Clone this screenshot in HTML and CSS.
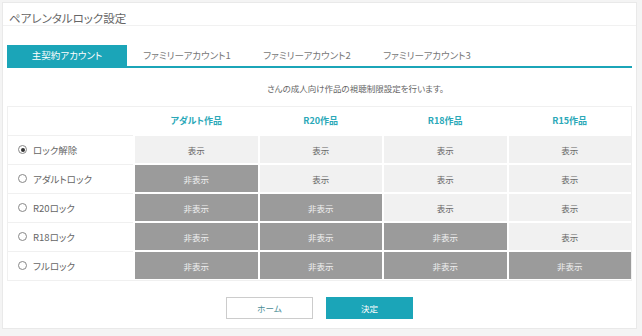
FILE: index.html
```html
<!DOCTYPE html>
<html lang="ja">
  <head>
    <meta charset="UTF-8" />
    <meta name="viewport" content="width=device-width, initial-scale=1.0" />
    <title>ペアレンタルロック設定</title>
    <link rel="stylesheet" href="styles.css">
  </head>
  <body>
    <div class="panel">
      <h2 class="panel-title">ペアレンタルロック設定</h2>

      <div class="tabs">
        <div class="tab active">主契約アカウント</div>
        <div class="tab">ファミリーアカウント1</div>
        <div class="tab">ファミリーアカウント2</div>
        <div class="tab">ファミリーアカウント3</div>
      </div>

      <p class="lead"><span class="user-name"></span>さんの成人向け作品の視聴制限設定を行います。</p>

      <!-- 制限テーブル -->
      <div class="lock-table">
        <div class="head"></div>
        <div class="head">アダルト作品</div>
        <div class="head">R20作品</div>
        <div class="head">R18作品</div>
        <div class="head">R15作品</div>

        <label class="label"><span class="radio checked"></span>ロック解除</label>
        <div class="cell">表示</div>
        <div class="cell">表示</div>
        <div class="cell">表示</div>
        <div class="cell">表示</div>

        <label class="label"><span class="radio"></span>アダルトロック</label>
        <div class="cell off">非表示</div>
        <div class="cell">表示</div>
        <div class="cell">表示</div>
        <div class="cell">表示</div>

        <label class="label"><span class="radio"></span>R20ロック</label>
        <div class="cell off">非表示</div>
        <div class="cell off">非表示</div>
        <div class="cell">表示</div>
        <div class="cell">表示</div>

        <label class="label"><span class="radio"></span>R18ロック</label>
        <div class="cell off">非表示</div>
        <div class="cell off">非表示</div>
        <div class="cell off">非表示</div>
        <div class="cell">表示</div>

        <label class="label"><span class="radio"></span>フルロック</label>
        <div class="cell off">非表示</div>
        <div class="cell off">非表示</div>
        <div class="cell off">非表示</div>
        <div class="cell off">非表示</div>
      </div>

      <div class="actions">
        <button class="btn btn-home">ホーム</button>
        <button class="btn btn-ok">決定</button>
      </div>
    </div>
  </body>
</html>
```

FILE: styles.css
```css
body {
  margin: 0;
  padding: 2px 5px 5px 2px;
  background-color: #f4f4f4;
  font-family: "Noto Sans CJK JP", "Noto Sans", sans-serif;
  font-feature-settings: "palt";
  color: #666;
}

.panel {
  background-color: #ffffff;
  border: 1px solid #e9e9e9;
  height: 327px;
  padding: 0 4px;
  box-sizing: border-box;
}

.panel-title {
  margin: 0 -4px;
  padding: 6px 0 0 6px;
  height: 23px;
  line-height: 19px;
  font-size: 11.5px;
  font-weight: normal;
  color: #666;
  border-bottom: 1px solid #f1f1f1;
  box-sizing: border-box;
}

.tabs {
  display: flex;
  margin-top: 19px;
  border-bottom: 2px solid #1ba5b8;
}

.tab {
  width: 120px;
  height: 21px;
  line-height: 21px;
  text-align: center;
  font-size: 9.5px;
  color: #777;
}

.tab.active {
  background-color: #1ba5b8;
  color: #ffffff;
}

.lead {
  margin: 13px 0 0;
  padding-left: 72px;
  height: 14px;
  line-height: 14px;
  text-align: center;
  font-size: 8.5px;
  color: #666;
}

/* 制限テーブル */
.lock-table {
  display: grid;
  grid-template-columns: 125px repeat(4, 1fr);
  grid-auto-rows: 27px;
  gap: 2px;
  margin-top: 11px;
  padding-bottom: 1px;
  border: 1px solid #f0f0f0;
}

.head {
  display: flex;
  align-items: center;
  justify-content: center;
  font-size: 9px;
  font-weight: bold;
  color: #2aa8b8;
}

.label {
  display: flex;
  align-items: center;
  padding-left: 10px;
  font-size: 9.5px;
  color: #666;
  box-shadow: 0 -1px 0 #f0f0f0;
}

.radio {
  width: 7px;
  height: 7px;
  border: 1px solid #888;
  border-radius: 50%;
  margin-right: 6px;
  position: relative;
}

.radio.checked::after {
  content: "";
  position: absolute;
  top: 1.5px;
  left: 1.5px;
  width: 4px;
  height: 4px;
  border-radius: 50%;
  background-color: #333;
}

.cell {
  display: flex;
  align-items: center;
  justify-content: center;
  background-color: #f1f1f1;
  font-size: 8.5px;
  color: #666;
}

.cell.off {
  background-color: #9b9b9b;
  color: #f0f0f0;
}

.actions {
  display: flex;
  justify-content: center;
  gap: 13px;
  margin-top: 16px;
}

.btn {
  width: 87px;
  height: 22px;
  font-family: inherit;
  font-size: 8.5px;
  border-radius: 0;
  cursor: pointer;
}

.btn-home {
  background-color: #ffffff;
  border: 1px solid #cccccc;
  color: #4a8d96;
}

.btn-ok {
  background-color: #1ba5b8;
  border: 1px solid #1ba5b8;
  color: #ffffff;
}
```
